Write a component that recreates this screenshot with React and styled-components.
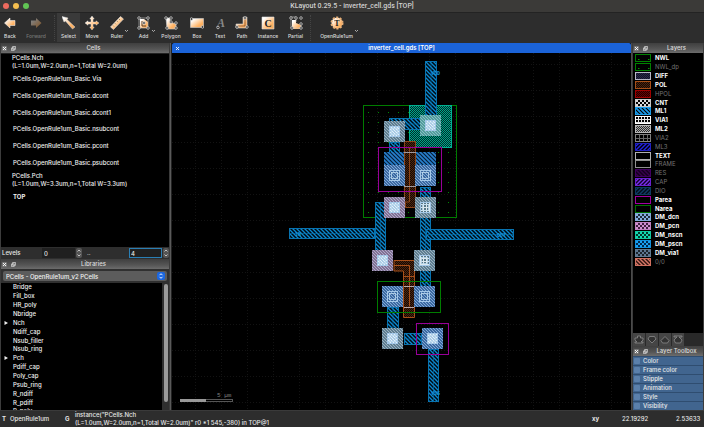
import React from 'react';
import styled, { createGlobalStyle, css } from 'styled-components';

const Global = createGlobalStyle`
  * { box-sizing: border-box; }
  body { margin: 0; background: #000; }
  body, button, input, select { font-family: Inter, "Liberation Sans", sans-serif; color: #e8e8e8; font-size: 6px; font-weight: 500; }
  button, input, select { margin: 0; padding: 0; border: 0; background: none; }
  ul { list-style: none; margin: 0; padding: 0; }
`;

const Window = styled.div`
  height: 100vh;
  display: flex;
  flex-direction: column;
  overflow: hidden;
  background: #2b2b2b;
`;

const TitleBar = styled.header`
  height: 13px;
  flex: none;
  display: grid;
  grid-template-columns: 1fr auto 1fr;
  align-items: center;
  background: #3b3a38;
  border-bottom: 1px solid #232323;
`;
const Lights = styled.div`
  display: flex;
  gap: 4px;
  padding-left: 3px;
`;
const Light = styled.button`
  width: 6px;
  height: 6px;
  border-radius: 50%;
  background: ${p => p.$color};
`;
const WindowTitle = styled.h1`
  margin: 0;
  font-family: Roboto, "Liberation Sans", sans-serif;
  font-size: 7px;
  line-height: 8px;
  font-weight: 500;
  color: #d0d0d0;
`;

const Toolbar = styled.nav`
  height: 30px;
  flex: none;
  display: flex;
  background: #2d2d2d;
`;
const Tool = styled.button`
  position: relative;
  flex: none;
  width: ${p => p.$w}px;
  height: 29px;
  display: flex;
  flex-direction: column;
  align-items: center;
  padding-top: 3px;
  font-size: 5px;
  line-height: 6px;
  white-space: nowrap;
  color: #dcdcdc;
  background: ${p => (p.$active ? '#3a3a3a' : 'transparent')};
  opacity: ${p => (p.disabled ? 0.4 : 1)};
  & > span { margin-top: 3px; }
`;
const Caret = styled.svg`
  position: absolute;
  right: 1px;
  bottom: 9px;
`;
const Separator = styled.div`
  flex: none;
  width: 1px;
  margin: 2px 2px;
  border-left: 1px dotted #444;
`;

const Body = styled.main`
  flex: 1;
  min-height: 0;
  display: grid;
  grid-template-columns: 171px 1fr 73px;
`;
const SideColumn = styled.aside`
  display: flex;
  flex-direction: column;
  min-height: 0;
  padding: 0 1px;
  background: #3c3c3c;
  border-right: ${p => (p.$left ? '1px solid #5a5a5a' : '0')};
  border-left: ${p => (p.$left ? '0' : '1px solid #4a4a4a')};
`;
const Dock = styled.section`
  flex: ${p => p.$share} 1 0;
  min-height: 0;
  display: flex;
  flex-direction: column;
`;
const DockHeader = styled.div`
  height: 10px;
  flex: none;
  display: grid;
  grid-template-columns: 17px 1fr;
  align-items: center;
  background: linear-gradient(#3f3f3f, #555 60%, #6c6c6c);
`;
const DockButtons = styled.div`
  display: flex;
  gap: 4px;
  padding-left: 1px;
  button { display: flex; }
`;
const DockTitle = styled.h2`
  margin: 0;
  font-size: 6px;
  line-height: 8px;
  font-weight: 500;
  text-align: center;
  color: #ddd;
`;

const CellList = styled.ul`
  flex: 1;
  min-height: 0;
  background: #000;
  border-top: 1px solid #222;
  display: grid;
  grid-template-rows: repeat(9, 1fr) 42px;
`;
const CellRow = styled.li`
  display: flex;
  flex-direction: column;
  justify-content: center;
  padding-left: ${p => (p.$double ? 11 : 12)}px;
  font-size: 6px;
  line-height: 8px;
  white-space: nowrap;
  font-weight: ${p => (p.$top ? 700 : 500)};
  color: #f0f0f0;
`;
const Levels = styled.div`
  height: 12px;
  flex: none;
  display: flex;
  align-items: center;
  padding-left: 1px;
  background: #2e2e2e;
  line-height: 8px;
`;
const LevelLabel = styled.label`
  width: ${p => p.$w}px;
  flex: ${p => (p.$grow ? '1' : 'none')};
  padding-left: ${p => (p.$grow ? 5 : 0)}px;
`;
const LevelInput = styled.input`
  width: 33px;
  height: 10px;
  background: #202020;
  padding-left: 2px;
  outline: ${p => (p.$focused ? '1px solid #2a7fb5' : '0')};
  outline-offset: -1px;
`;
const Spinner = styled.button`
  display: flex;
  width: 7px;
  justify-content: center;
`;

const ComboWrap = styled.label`
  flex: none;
  height: 14px;
  background: #303030;
  padding: 2px 2px;
  display: grid;
  align-items: center;
  & > * { grid-area: 1 / 1; }
  svg { justify-self: end; margin-right: 2px; pointer-events: none; }
`;
const Combo = styled.select`
  appearance: none;
  height: 10px;
  width: 100%;
  padding-left: 3px;
  border-radius: 2px;
  background: #5c5c5c;
  color: #f2f2f2;
`;
const LibraryBody = styled.div`
  flex: 1;
  min-height: 0;
  display: grid;
  grid-template-columns: 1fr 7px;
  background: #000;
`;
const LibraryList = styled.ul`
  min-height: 0;
  display: grid;
  grid-template-rows: repeat(14, minmax(0, 1fr)) 3px;
  overflow: hidden;
`;
const LibraryRow = styled.li`
  display: grid;
  grid-template-columns: 12px 1fr;
  align-items: center;
  align-content: ${p => (p.$cut ? 'start' : 'center')};
  line-height: 8px;
  color: #f0f0f0;
  svg { margin-left: 3px; }
`;
const ScrollTrack = styled.div`
  background: #2f2f2f;
  padding: 1px 1px 8px 2px;
  display: flex;
`;
const ScrollThumb = styled.div`
  flex: 1;
  border-radius: 2px;
  background: #9a9a9a;
`;

const Center = styled.section`
  min-width: 0;
  min-height: 0;
  display: flex;
  flex-direction: column;
  border-left: 1px solid #222;
  background: #000;
`;
const ViewTab = styled.div`
  height: 10px;
  flex: none;
  display: grid;
  grid-template-columns: 10px 1fr 10px;
  align-items: center;
  border-radius: 2px 2px 0 0;
  background: #1b63d8;
  button { display: flex; justify-content: center; }
`;
const ViewTitle = styled.span`
  text-align: center;
  font-weight: 600;
  line-height: 8px;
  color: #fff;
`;
const Canvas = styled.svg`
  flex: 1;
  min-height: 0;
  width: 100%;
  display: block;
`;

const LayerList = styled.ul`
  flex: 1;
  min-height: 0;
  display: grid;
  grid-template-rows: repeat(24, minmax(0, 1fr)) 67px;
  padding-top: 1px;
  background: #000;
`;
const LayerRow = styled.li`
  display: grid;
  grid-template-columns: 16px 1fr;
  gap: 4px;
  align-items: center;
  padding-left: 2px;
  line-height: 8px;
  font-size: 6px;
  ${p => p.$hidden
    ? css`color: #747474; font-weight: 400;`
    : css`color: #fff; font-weight: 700;`}
  svg { display: block; }
`;
const OrderBar = styled.div`
  flex: none;
  height: 13px;
  display: grid;
  grid-template-columns: repeat(4, 12px);
  gap: 1px;
  background: #292929;
`;
const OrderButton = styled.button`
  display: grid;
  place-items: center;
  background: #454545;
`;
const ToolboxList = styled.div`
  flex: 1;
  min-height: 0;
  display: grid;
  grid-template-rows: repeat(6, minmax(0, 1fr));
  background: #2a4566;
`;
const ToolboxItem = styled.button`
  display: grid;
  grid-template-columns: 6px 1fr;
  gap: 3px;
  align-items: center;
  padding-left: 1px;
  text-align: left;
  line-height: 8px;
  background: #41658f;
  border-top: 1px solid #2f4d70;
  &::before { content: ''; height: 6px; background: #5b80ab; border-radius: 1px; }
`;

const StatusBar = styled.footer`
  height: 17px;
  flex: none;
  display: grid;
  grid-template-columns: 9px 54px 11px 1fr 31px 54px 28px;
  align-items: center;
  padding: 0 0 0 1px;
  background: #2d2d2d;
  border-top: 1px solid #3a3a3a;
  line-height: 8px;
  white-space: pre;
`;
const StatusKey = styled.strong`
  font-weight: 700;
  padding-left: 1px;
`;

const ORANGE = '#f0a860';
const Line = ({ d, w = 1 }) => <path d={d} fill="none" stroke="#cfcfcf" strokeWidth={w} />;
const Dots = ({ at }) => at.map(([x, y]) => (
  <circle key={`${x}-${y}`} cx={x} cy={y} r="1.3" fill="#2d2d2d" stroke="#d8d8d8" strokeWidth=".7" />
));

const glyphs = {
  back: <path d="M1.5 7 7 2v2.500h5v5H7V12Z" fill="url(#warm)" stroke="#fff" strokeWidth=".5" />,
  forward: <path d="M12.500 7 7 2v2.500H2v5h5V12Z" fill="url(#warm)" />,
  select: <path d="M0 .5 6 2 5 3.500l8 7.500-2.500 2-7-8L2 6Z" fill="url(#warm)" stroke="#ddd" strokeWidth=".5" />,
  move: <path d="M7 0 9.200 3H8v3h3V4.800L14 7l-3 2.200V8H8v3h1.200L7 14l-2.200-3H6V8H3v1.200L0 7l3-2.200V6h3V3H4.800Z" fill="url(#warm)" stroke="#eee" strokeWidth=".4" />,
  ruler: <><path d="M.5 11 10.500 .5 13.500 3 3.500 13.500Z" fill="url(#warm)" stroke="#ddd" strokeWidth=".6" /><path d="m3 9.500 1 1m1-3.200 1 1m1-3.200 1 1m1-3.100 1 1" stroke="#553" strokeWidth=".6" /></>,
  add: <><path d="M3 3h4l4 3v6H3Z" fill="url(#warm)" /><Line d="M2 2h9v10H2Z" w=".6" /><path d="M5 5v5h4" stroke="#5c3b1d" fill="none" /><Dots at={[[2, 2], [11, 2], [2, 12], [11, 12], [7, 7]]} /></>,
  polygon: <><path d="M2 2h4v4l6 2v5H3Z" fill="url(#warm)" stroke="#ccc" strokeWidth=".6" /><Dots at={[[2, 2], [7, 2], [7, 6], [12, 7], [12, 12], [3, 12]]} /></>,
  box: <><path d="M.5 2.500h13v9H.5Z" fill="url(#warm)" stroke="#ccc" strokeWidth=".6" /><Dots at={[[1.500, 3], [12.500, 11]]} /></>,
  text: <><text x="4" y="11" fontSize="12" fontFamily="Liberation Serif, serif" fontStyle="italic" fontWeight="700" fill="#888">A</text><Dots at={[[5, 11.500]]} /></>,
  path: <><path d="M8 1h4v11H1V8h7Z" fill="url(#warm)" stroke="#ccc" strokeWidth=".6" /><path d="M10 3v7H3" fill="none" stroke="#704020" strokeWidth=".7" /><Dots at={[[2, 11], [12, 11], [10, 2]]} /></>,
  instance: <><path d="M1 1h12v12H1Z" fill="url(#warm)" stroke="#ddd" strokeWidth=".6" /><text x="7" y="10.500" textAnchor="middle" fontSize="10" fontWeight="700" fontFamily="Liberation Serif, serif" fill="#1c1c1c">C</text></>,
  partial: <><path d="M3 4h4v3l5 2v4H3Z" fill="url(#warm)" /><Line d="M1 1h6v5M12 7v5H2V3" w=".6" /><Dots at={[[2, 2], [7, 2], [12, 2], [12, 8], [12, 12], [3, 12]]} /></>,
  tech: <><circle cx="7" cy="7" r="5.500" fill="url(#warm)" stroke="#e8b078" strokeWidth="2" strokeDasharray="2 1.500" /><text x="7" y="10" textAnchor="middle" fontSize="8" fontWeight="700" fontFamily="Liberation Serif, serif" fill="#222">T</text></>,
};

const Glyph = ({ name }) => (
  <svg width="14" height="14" viewBox="0 0 14 14" aria-hidden="true">{glyphs[name]}</svg>
);

const tools = [
  ['back', 'Back', 20], ['forward', 'Forward', 32, { disabled: true }], null,
  ['select', 'Select', 23, { $active: true }], ['move', 'Move', 24], ['ruler', 'Ruler', 26, { menu: true }],
  ['add', 'Add', 27, { menu: true }], ['polygon', 'Polygon', 28], ['box', 'Box', 24], ['text', 'Text', 22],
  ['path', 'Path', 22], ['instance', 'Instance', 30], ['partial', 'Partial', 25], null,
  ['tech', 'OpenRule1um', 47, { menu: true }],
];

const cells = [
  ['PCells.Nch', '(L=1.0um,W=2.0um,n=1,Total W=2.0um)'],
  ['PCells.OpenRule1um_Basic.Via'], ['PCells.OpenRule1um_Basic.dcont'], ['PCells.OpenRule1um_Basic.dcont1'],
  ['PCells.OpenRule1um_Basic.nsubcont'], ['PCells.OpenRule1um_Basic.pcont'], ['PCells.OpenRule1um_Basic.psubcont'],
  ['PCells.Pch', '(L=1.0um,W=3.3um,n=1,Total W=3.3um)'], ['TOP'],
];

const libraryCells = ['Bridge', 'Fill_box', 'HR_poly', 'Nbridge', 'Nch', 'Ndiff_cap', 'Nsub_filler', 'Nsub_ring',
  'Pch', 'Pdiff_cap', 'Poly_cap', 'Psub_ring', 'R_ndiff', 'R_pdiff', 'R_poly'];

const layers = [
  ['NWL', '#008000', 'sparse'], ['NWL_dp', '#008000', 'sparse', true], ['DIFF', '#b8b8c8', 'diff'], ['POL', '#a85018', 'poly'],
  ['HPOL', '#a00000', 'hpol', true], ['CNT', '#c8c8c8', 'cnt'], ['ML1', '#1a9bea', 'ml1s'], ['VIA1', '#fff', 'via'],
  ['ML2', '#b8b8b8', 'ml2'], ['VIA2', '#808080', 'via2', true], ['ML3', '#2020c0', 'ml3', true], ['TEXT', '#b0b0b0', null],
  ['FRAME', '#909090', null, true], ['RES', '#400060', 'res', true], ['CAP', '#6a20d0', 'cap', true], ['DIO', '#0c3a60', 'dio', true],
  ['Parea', '#a000a0', null], ['Narea', '#007000', null], ['DM_dcn', '#80a8d8', 'dcn'], ['DM_pcn', '#c080c0', 'pcn'],
  ['DM_nscn', '#10c8a0', 'nscn'], ['DM_pscn', '#1090e0', 'pscn'], ['DM_via1', '#607890', 'via1'], ['0/0', '#d07060', 'zero', true],
];

const Hatch = ({ id, color, bg = 'none', size = 4, back = true, w = 1.4 }) => (
  <pattern id={id} width={size} height={size} patternUnits="userSpaceOnUse">
    <rect width={size} height={size} fill={bg} />
    <path
      d={back
        ? `M-1-1 ${size + 1} ${size + 1}M-1 ${size - 1}l2 2M${size - 1}-1l2 2`
        : `M-1 ${size + 1} ${size + 1}-1M-1 1l2-2M${size - 1} ${size + 1}l2-2`}
      stroke={color}
      strokeWidth={w}
    />
  </pattern>
);
const Checks = ({ id, color, bg = '#000', size = 2 }) => (
  <pattern id={id} width={size} height={size} patternUnits="userSpaceOnUse">
    <rect width={size} height={size} fill={bg} />
    <path d={`M0 0h${size / 2}v${size}h${size / 2}v${-size / 2}H0Z`} fill={color} />
  </pattern>
);
const Mesh = ({ id, color, bg = '#000' }) => (
  <pattern id={id} width="4" height="4" patternUnits="userSpaceOnUse">
    <rect width="4" height="4" fill={bg} />
    <path d="M0 0l4 4M4 0 0 4" stroke={color} strokeWidth="1" />
  </pattern>
);
const GridFill = ({ id, color, bg = '#000', size = 3 }) => (
  <pattern id={id} width={size} height={size} patternUnits="userSpaceOnUse">
    <rect width={size} height={size} fill={bg} />
    <path d={`M.5 0v${size}M0 .5h${size}`} stroke={color} />
  </pattern>
);

const Definitions = () => (
  <svg width="0" height="0" aria-hidden="true" display="block">
    <defs>
      <linearGradient id="warm" x1="0" y1="0" x2="1" y2="1">
        <stop offset="0.150" stopColor="#fff" />
        <stop offset=".7" stopColor="#ffb365" />
        <stop offset="1" stopColor={ORANGE} />
      </linearGradient>
      <pattern id="sparse" width="10" height="12" patternUnits="userSpaceOnUse">
        <path d="M3 5.500h1.500" stroke="#00a000" />
      </pattern>
      <pattern id="well" width="10" height="10" patternUnits="userSpaceOnUse" x="363" y="107">
        <path d="M5 5.500h1" stroke="#008a00" />
      </pattern>
      <pattern id="guides" width="26" height="26" patternUnits="userSpaceOnUse" x="195" y="64">
        <path d="M.5 0v26M0 .5h26" stroke="#131313" strokeDasharray="1 2" />
      </pattern>
      <Checks id="diff" color="#282848" bg="#141428" />
      <Checks id="poly" color="#4e260e" bg="#140803" />
      <Checks id="hpol" color="#6c0000" bg="#200000" />
      <Mesh id="cnt" color="#d8d8d8" />
      <Hatch id="ml1" color="#0b8ad2" bg="#000a12" w={1.300} />
      <Hatch id="ml1s" color="#1a9bea" w={1.700} />
      <GridFill id="via" color="#e4e4e4" />
      <Checks id="ml2" color="#a8a8a8" bg="#303030" />
      <GridFill id="via2" color="#666" size={4} />
      <Hatch id="ml3" color="#2222e8" back={false} />
      <Hatch id="res" color="#38004c" bg="#12001c" />
      <Hatch id="cap" color="#7a30ec" back={false} bg="#12002c" />
      <Hatch id="dio" color="#103c64" bg="#020c18" back={false} />
      <Mesh id="dcn" color="#84aede" bg="#202c3c" />
      <Mesh id="pcn" color="#d090d0" bg="#402040" />
      <Mesh id="nscn" color="#14d8b0" bg="#00382c" />
      <Mesh id="pscn" color="#18a0f0" bg="#002850" />
      <Mesh id="via1" color="#5c7690" bg="#1c242c" />
      <Hatch id="zero" color="#d87868" bg="#301410" />
      <Checks id="teal" color="#00a48a" bg="#002c28" />
      <Hatch id="padBlue" color="#88acdc" bg="#1c5088" size={3} w={1.100} />
      <Hatch id="padGrey" color="#a0b6c4" bg="#44687e" size={3} w={1.100} />
      <Hatch id="padTeal" color="#8cc4c8" bg="#3c8c8c" size={3} w={1.100} />
      <Hatch id="padPink" color="#b4acd0" bg="#6c5c7c" size={3} w={1.100} />
      <Hatch id="metal" color="#2880cc" bg="#041c38" size={4} w={1.600} />
      <Hatch id="cut" color="#e4f0fa" bg="#7cb0d6" size={3} w={1.300} />
      <GridFill id="via1cut" color="#dce8ee" bg="#587888" />
    </defs>
  </svg>
);

const wires = [
  [425, 61, 12, 58], [389, 118, 32, 12], [389, 142, 11, 12], [375, 202, 11, 50], [420, 187, 11, 100],
  [289, 228, 86, 11], [426, 229, 88, 11], [387, 307, 12, 23], [404, 333, 18, 12], [428, 349, 11, 53],
];
const pads = [
  [384, 121, 'padGrey', 'cut'], [420, 115, 'padTeal', 'cut'], [384, 165, 'padBlue'], [415, 165, 'padBlue'],
  [384, 197, 'padPink', 'cut'], [415, 197, 'padGrey', 'via1cut'], [372, 250, 'padPink', 'cut'],
  [414, 250, 'padGrey', 'via1cut'], [382, 286, 'padBlue'], [414, 286, 'padBlue'],
  [382, 328, 'padGrey', 'cut'], [422, 328, 'padBlue', 'cut'],
];

const Layout = () => (
  <Canvas viewBox="172 53 459 357" role="img" aria-label="Inverter cell layout">
    <rect x="172" y="53" width="459" height="357" fill="url(#guides)" />
    <rect x="363.500" y="105.500" width="93" height="112" fill="url(#well)" stroke="#007c00" />
    <rect x="409.500" y="105.500" width="42" height="42" fill="url(#teal)" stroke="#00b090" />
    {wires.map(([x, y, w, h]) => (
      <g key={`${x}-${y}`}>
        <rect x={x + .5} y={y + .5} width={w - 1} height={h - 1} fill="url(#ml1)" stroke="#0873b0" />
        {h > w ? <path d={`M${x + w / 2} ${y}v${h}`} stroke="#0873b0" strokeWidth=".6" /> : <path d={`M${x} ${y + h / 2}h${w}`} stroke="#0873b0" strokeWidth=".6" />}
      </g>
    ))}
    <rect x="384" y="152" width="21" height="14" fill="url(#metal)" />
    <rect x="415" y="152" width="21" height="14" fill="url(#metal)" />
    <path d="M404.500 141.500h11v66h-10v-5h-1Z" fill="url(#poly)" stroke="#8c4418" />
    <path d="M409.500 147v55h-5" fill="none" stroke="#8c4418" />
    <path d="M404 152.500h12M404 186.500h12" stroke="#a0989c" />
    <path d="M394 260.500h20.500v57h-11V271H394Z" fill="url(#poly)" stroke="#a8501a" />
    <path d="M394 265.500h15.500v41M403 276.500h12" fill="none" stroke="#a8501a" />
    <path d="M404 286.500h10M404 307.500h10" stroke="#b8a8a8" />
    {pads.map(([x, y, fill, cut]) => (
      <g key={`${x}-${y}`}>
        <rect x={x} y={y} width="21" height="21" fill={`url(#${fill})`} />
        <rect x={x + 5.500} y={y + 5.500} width="10" height="10" fill={cut ? `url(#${cut})` : 'none'} stroke="#a4c8e8" strokeWidth="1" />
        <rect x={x + 7.500} y={y + 7.500} width="6" height="6" fill="none" stroke="#c0dcf0" strokeWidth=".8" />
      </g>
    ))}
    <rect x="378.500" y="147.500" width="63" height="44" fill="none" stroke="#980098" />
    <rect x="416.500" y="323.500" width="32" height="31" fill="none" stroke="#980098" />
    <rect x="377.500" y="281.500" width="63" height="31" fill="none" stroke="#007c00" />
    <g fill="#1694dc" fontSize="5" fontFamily="Liberation Mono, monospace" fontWeight="700">
      <text x="431" y="75">VDD</text>
      <text x="431" y="395">VSS</text>
      <text x="295" y="236">IN</text>
      <text x="497" y="237">OUT</text>
    </g>
    <text x="217" y="397" fill="#808080" fontSize="6" fontFamily="Liberation Mono, monospace">5 µm</text>
    <rect x="180.500" y="399.500" width="52" height="2" fill="#000" stroke="#555" />
    <rect x="180" y="399" width="26" height="3" fill="#999" />
  </Canvas>
);

const CloseMark = ({ color = '#fff', plain }) => (
  <svg width="5" height="5" viewBox="0 0 5 5">
    {!plain && <rect width="5" height="5" rx="1" fill="#777" />}
    <path d="m1 1 3 3m0-3-3 3" stroke={color} strokeWidth=".9" />
  </svg>
);
const Header = ({ title }) => (
  <DockHeader>
    <DockButtons>
      <button aria-label={`Close ${title}`}><CloseMark /></button>
      <button aria-label={`Float ${title}`}>
        <svg width="5" height="5" viewBox="0 0 5 5" fill="#666" stroke="#ddd" strokeWidth=".7"><path d="M1.600.5h3v2.800h-3ZM.5 1.900h2.700v2.700H.5Z" /></svg>
      </button>
    </DockButtons>
    <DockTitle>{title}</DockTitle>
  </DockHeader>
);
const Steps = ({ label }) => (
  <Spinner aria-label={label}>
    <svg width="6" height="10" viewBox="0 0 6 10"><rect width="6" height="10" rx="2" fill="#555" /><path d="m1.500 3.500 1.500-1.500 1.500 1.500m-3 3L3 8l1.500-1.500" fill="none" stroke="#ddd" strokeWidth=".8" /></svg>
  </Spinner>
);

const orderIcons = [
  'M3.500 1h3v2H9v2L7 7h2v1H1V7h2L1 5V3h2.500Z', 'M2.500 1.500h5L9 4 5 8 1 4Z', 'M5 1.500 9 5.500 7.500 8h-5L1 5.500Z', 'M1 1h8v1H6l3 3-1.500 3h-5L1 5l3-3H1Z',
];

export default function App() {
  return (
    <Window>
      <Global />
      <Definitions />
      <TitleBar>
        <Lights>
          <Light $color="#ed6a5e" aria-label="Close window" />
          <Light $color="#f5bf4f" aria-label="Minimise window" />
          <Light $color="#61c554" aria-label="Zoom window" />
        </Lights>
        <WindowTitle>KLayout 0.29.5 - inverter_cell.gds [TOP]</WindowTitle>
      </TitleBar>
      <Toolbar>
        {tools.map((tool, i) => {
          if (!tool) return <Separator key={i} />;
          const [icon, label, width, { menu, ...rest } = {}] = tool;
          return (
            <Tool key={label} $w={width} {...rest}>
              <Glyph name={icon} />
              <span>{label}</span>
              {menu && <Caret width="5" height="4" viewBox="0 0 5 4"><path d="m1 1 1.500 1.500L4 1" fill="none" stroke="#ccc" strokeWidth=".8" /></Caret>}
            </Tool>
          );
        })}
      </Toolbar>
      <Body>
        <SideColumn $left>
          <Dock $share={216}>
            <Header title="Cells" />
            <CellList>
              {cells.map(([name, detail]) => (
                <CellRow key={name} $double={!!detail} $top={name === 'TOP'}>
                  <span>{name}</span>
                  {detail && <span>{detail}</span>}
                </CellRow>
              ))}
            </CellList>
            <Levels>
              <LevelLabel $w={40} htmlFor="from">Levels</LevelLabel>
              <LevelInput id="from" defaultValue="0" />
              <Steps label="Change first level" />
              <LevelLabel $grow htmlFor="to">..</LevelLabel>
              <LevelInput id="to" defaultValue="4" $focused />
              <Steps label="Change last level" />
            </Levels>
          </Dock>
          <Dock $share={151}>
            <Header title="Libraries" />
            <ComboWrap>
              <Combo aria-label="Library"><option>PCells - OpenRule1um_v2 PCells</option></Combo>
              <svg width="8" height="8" viewBox="0 0 8 8"><rect width="8" height="8" rx="2" fill="#1a66e0" /><path d="m2.500 3.200L4 1.700l1.500 1.500m-3 1.600L4 6.300l1.500-1.500" fill="none" stroke="#fff" strokeWidth=".9" /></svg>
            </ComboWrap>
            <LibraryBody>
              <LibraryList>
                {libraryCells.map((name, i) => (
                  <LibraryRow key={name} $cut={i === 14}>
                    {name === 'Nch' || name === 'Pch' ? <svg width="4" height="4" viewBox="0 0 4 4"><path d="M.5 0 4 2 .5 4Z" fill="#eee" /></svg> : <i />}
                    <span>{name}</span>
                  </LibraryRow>
                ))}
              </LibraryList>
              <ScrollTrack><ScrollThumb /></ScrollTrack>
            </LibraryBody>
          </Dock>
        </SideColumn>
        <Center>
          <ViewTab>
            <button aria-label="Close view"><CloseMark plain /></button>
            <ViewTitle>inverter_cell.gds [TOP]</ViewTitle>
          </ViewTab>
          <Layout />
        </Center>
        <SideColumn>
          <Dock $share={303}>
            <Header title="Layers" />
            <LayerList>
              {layers.map(([name, color, fill, hidden]) => (
                <LayerRow key={name} $hidden={hidden}>
                  <svg width="16" height="8" viewBox="0 0 16 8">
                    <rect x=".5" y=".5" width="15" height="7" fill={fill ? `url(#${fill})` : '#000'} stroke={color} />
                  </svg>
                  <span>{name}</span>
                </LayerRow>
              ))}
            </LayerList>
            <OrderBar>
              {orderIcons.map((d, i) => (
                <OrderButton key={d} aria-label={['Move to top', 'Move down', 'Move up', 'Move to bottom'][i]}>
                  <svg width="10" height="9" viewBox="0 0 10 9"><path d={d} fill="#333" stroke="#8a8a8a" strokeWidth=".8" /></svg>
                </OrderButton>
              ))}
            </OrderBar>
          </Dock>
          <Dock $share={64}>
            <Header title="Layer Toolbox" />
            <ToolboxList>
              {['Color', 'Frame color', 'Stipple', 'Animation', 'Style', 'Visibility'].map(name => (
                <ToolboxItem key={name}>{name}</ToolboxItem>
              ))}
            </ToolboxList>
          </Dock>
        </SideColumn>
      </Body>
      <StatusBar>
        <StatusKey>T</StatusKey>
        <span>OpenRule1um</span>
        <StatusKey>G</StatusKey>
        <span>{'instance("PCells.Nch\n(L=1.0um,W=2.0um,n=1,Total W=2.0um)" r0 *1 545,-380) in TOP@1'}</span>
        <StatusKey>xy</StatusKey>
        <span>22.19292</span>
        <span>2.53633</span>
      </StatusBar>
    </Window>
  );
}
